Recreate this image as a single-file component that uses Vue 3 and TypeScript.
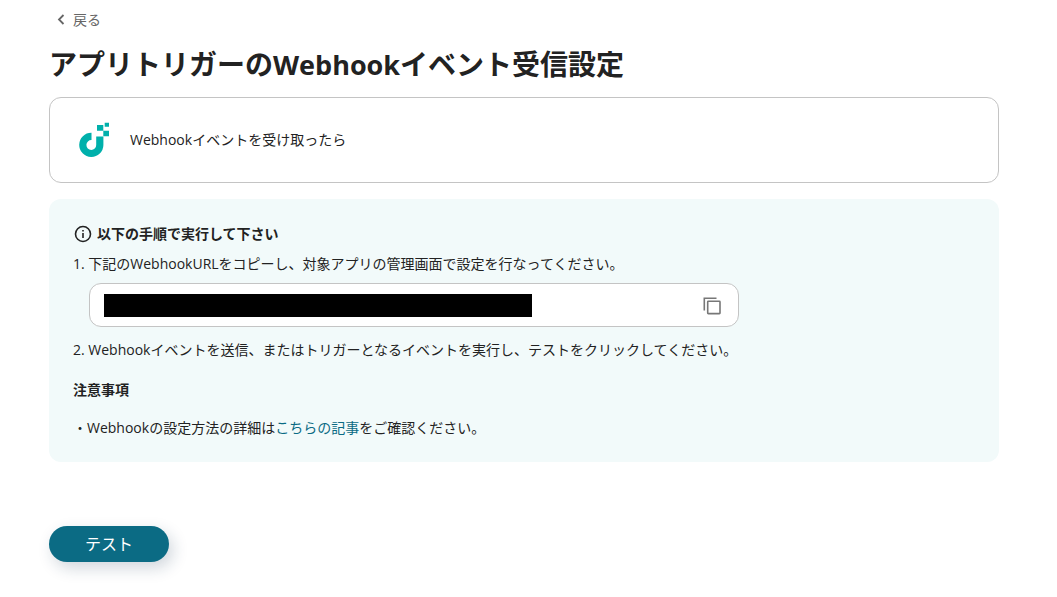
<script setup lang="ts">
import { ref } from 'vue'

const webhookUrl = ref<string>('')

async function copyUrl(): Promise<void> {
  await navigator.clipboard?.writeText(webhookUrl.value)
}
</script>

<template>
  <main class="page">
    <a class="back" href="#">
      <svg class="back-icon" viewBox="0 0 8 12" aria-hidden="true">
        <path d="M6.500 1 2 5.500l4.500 4.500" fill="none" stroke="currentColor" stroke-width="1.800" />
      </svg>
      戻る
    </a>
    <h1 class="title">アプリトリガーの<span class="latin">Webhook</span>イベント受信設定</h1>

    <section class="trigger">
      <svg class="logo" viewBox="0 0 32 36" aria-hidden="true">
        <path
          d="M12.500 10.800A12.100 12.100 0 1 0 24.400 23V14.600H17.200V23A4.900 4.900 0 1 1 12.500 18.100Z"
          fill="#00b0ab"
        />
        <path d="M18 3h6.300v5.800H18zM24.300 8.800H30v5.400h-5.700zM25.700 0.700H30v4h-4.300z" fill="#00b0ab" />
      </svg>
      <p class="trigger-name">Webhookイベントを受け取ったら</p>
    </section>

    <section class="guide">
      <h2 class="guide-title">
        <svg class="info-icon" viewBox="0 0 18 18" fill="none" stroke="currentColor" aria-hidden="true">
          <circle cx="9" cy="9" r="7.500" stroke-width="1.600" />
          <path d="M9 8v5M9 5v1.600" stroke-width="1.600" />
        </svg>
        以下の手順で実行して下さい
      </h2>
      <label class="step" for="webhook-url">1. 下記のWebhookURLをコピーし、対象アプリの管理画面で設定を行なってください。</label>
      <div class="url-box">
        <input id="webhook-url" v-model="webhookUrl" class="url" type="text" readonly />
        <button class="copy" type="button" aria-label="コピー" @click="copyUrl">
          <svg class="copy-icon" viewBox="0 0 18 18" fill="none" stroke="currentColor" stroke-width="1.600" aria-hidden="true">
            <path d="M1.300 13.500V1.300H13.500" />
            <rect x="4.700" y="4.300" width="12.300" height="12.300" rx="0.600" />
          </svg>
        </button>
      </div>
      <p class="step">2. Webhookイベントを送信、またはトリガーとなるイベントを実行し、テストをクリックしてください。</p>
      <h3 class="notes-title">注意事項</h3>
      <p class="note">・Webhookの設定方法の詳細は<a class="link" href="#">こちらの記事</a>をご確認ください。</p>
    </section>

    <button class="test" type="button">テスト</button>
  </main>
</template>

<style>
body {
  margin: 0;
  background: #fff;
}
</style>

<style scoped>
.page {
  padding: 8px 58px 32px 49px;
  color: #222;
  font-family: "Open Sans", "Noto Sans CJK JP", sans-serif;
  font-size: 14px;
  line-height: 24px;
}

.back {
  display: flex;
  align-items: center;
  gap: 8px;
  width: max-content;
  padding-left: 8px;
  color: #666;
  text-decoration: none;
}

.back-icon {
  width: 8px;
  height: 12px;
}

.title {
  margin: 12px 0 13px;
  font-size: 28px;
  font-weight: 700;
  line-height: 40px;
}

.latin {
  font-size: 27px;
  line-height: 1;
}

.trigger {
  display: flex;
  align-items: center;
  gap: 19px;
  box-sizing: border-box;
  min-height: 86px;
  padding: 24px 29px;
  border: 1px solid #c4c4c4;
  border-radius: 12px;
}

.logo {
  width: 32px;
  height: 36px;
}

.trigger-name {
  margin: 0;
}

.guide {
  margin-top: 16px;
  padding: 23px 24px 22px;
  border-radius: 12px;
  background: #f2fafa;
}

.guide-title {
  display: flex;
  align-items: center;
  gap: 5px;
  margin: 0 0 6px;
  padding-left: 1px;
  font-size: 14px;
  font-weight: 700;
}

.info-icon {
  width: 18px;
  height: 18px;
}

.step {
  display: block;
  margin: 0;
}

.url-box {
  display: flex;
  align-items: flex-end;
  justify-content: space-between;
  box-sizing: border-box;
  max-width: 650px;
  margin: 7px 0 11px 16px;
  padding: 9px 14px;
  border: 1px solid #c4c4c4;
  border-radius: 12px;
  background: #fff;
}

.url {
  box-sizing: border-box;
  width: 428px;
  height: 23px;
  padding: 0;
  border: 0;
  background: #000;
}

.copy {
  display: flex;
  padding: 4px 3px 2px;
  border: 0;
  background: none;
  color: #777;
  cursor: pointer;
}

.copy-icon {
  width: 18px;
  height: 18px;
}

.notes-title {
  margin: 16px 0 14px;
  font-size: 14px;
  font-weight: 700;
}

.note {
  margin: 0;
}

.link {
  color: #0b6b84;
  text-decoration: none;
}

.test {
  display: block;
  min-width: 120px;
  margin-top: 64px;
  padding: 6px 24px;
  border: 0;
  border-radius: 18px;
  background: #0b6b84;
  box-shadow: 4px 6px 16px rgba(20, 50, 80, 0.2);
  color: #fff;
  font-family: inherit;
  font-size: 16px;
  line-height: 24px;
  cursor: pointer;
}
</style>
